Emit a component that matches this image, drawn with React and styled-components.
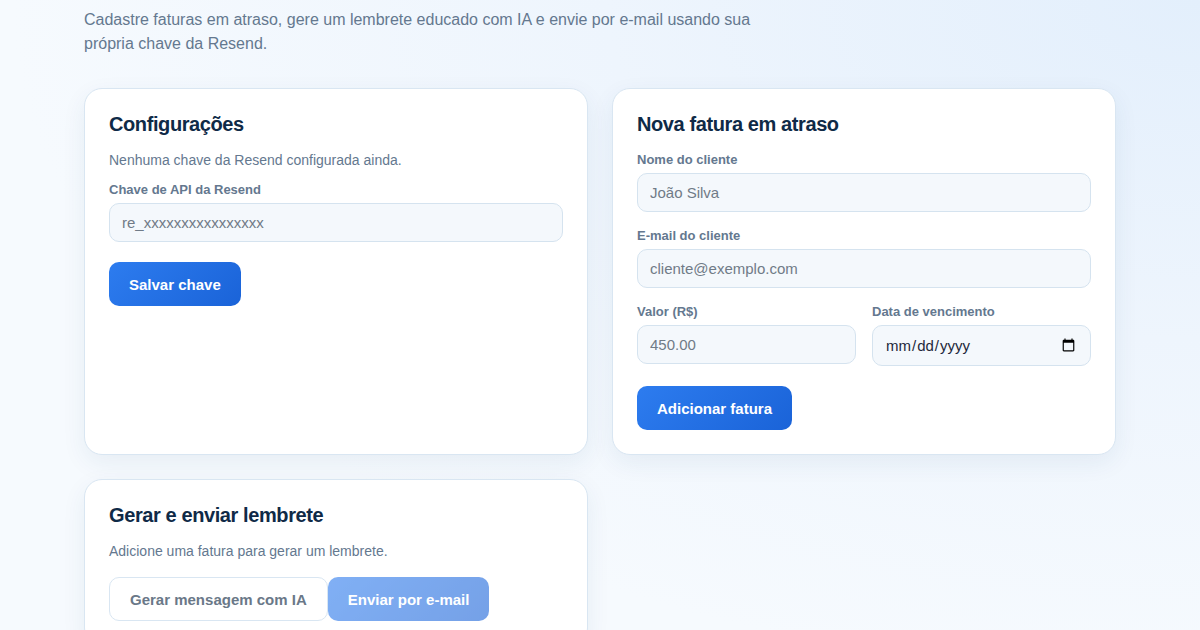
import React, { useState } from "react";
import styled, { createGlobalStyle } from "styled-components";

const GlobalStyle = createGlobalStyle`
  * { box-sizing: border-box; }
  html, body { margin: 0; padding: 0; }
  body {
    font-family: "Liberation Sans", Arial, sans-serif;
    background: radial-gradient(ellipse at 100% 0%, #e3effc 0%, #eef5fd 35%, #f6fafe 70%);
    background-color: #f6fafe;
    min-height: 630px;
    color: #0f2a47;
  }
`;

const Page = styled.div`
  width: 1032px;
  margin: 0 auto;
  padding: 8px 0 40px;
`;

const Intro = styled.p`
  margin: 0 0 32px;
  max-width: 680px;
  font-size: 16px;
  line-height: 24px;
  color: #64788f;
`;

const Grid = styled.div`
  display: grid;
  grid-template-columns: 1fr 1fr;
  gap: 24px;
`;

const Card = styled.section`
  background: #fff;
  border: 1px solid #d9e6f2;
  border-radius: 18px;
  padding: 24px;
  box-shadow: 0 8px 24px rgba(30, 64, 110, 0.07);
  display: flex;
  flex-direction: column;
`;

const Title = styled.h2`
  margin: 0 0 ${(p) => p.$gap || 17}px;
  font-size: 20px;
  line-height: 22px;
  font-weight: 700;
  letter-spacing: -0.02em;
  color: #0f2a47;
`;

const Note = styled.p`
  margin: 0 0 12px;
  font-size: 14px;
  line-height: 20px;
  color: #64788f;
`;

const Field = styled.label`
  display: flex;
  flex-direction: column;
  gap: 6px;
  margin-bottom: ${(p) => (p.$last ? 20 : 16)}px;
  min-width: 0;
`;

const LabelText = styled.span`
  font-size: 13px;
  line-height: 15px;
  font-weight: 700;
  color: #64788f;
`;

const Input = styled.input`
  width: 100%;
  height: ${(p) => (p.type === "date" ? 41 : 39)}px;
  padding: 0 12px;
  border: 1px solid #d5e3ef;
  border-radius: 10px;
  background: #f4f8fc;
  font-family: "Liberation Sans", Arial, sans-serif;
  font-size: 15px;
  color: #1e293b;
  outline: none;
  &::placeholder { color: #707b87; }
`;

const Row = styled.div`
  display: grid;
  grid-template-columns: 1fr 1fr;
  gap: 16px;
`;

const Actions = styled.div`
  display: flex;
  align-items: center;
  margin-top: ${(p) => p.$top || 0}px;
`;

const Button = styled.button`
  height: 44px;
  padding: 0 20px;
  border-radius: 10px;
  font-family: "Liberation Sans", Arial, sans-serif;
  font-size: 15px;
  font-weight: 700;
  cursor: pointer;
  border: none;
  color: #fff;
  background: linear-gradient(135deg, #2d7cef 0%, #1a63d8 100%);
  &:disabled {
    opacity: 0.6;
    cursor: default;
  }
`;

const GhostButton = styled(Button)`
  background: #fff;
  border: 1px solid #d9e6f2;
  color: #6a7888;
`;

export default function App() {
  const [key, setKey] = useState("");

  return (
    <>
      <GlobalStyle />
      <Page>
        <Intro>
          Cadastre faturas em atraso, gere um lembrete educado com IA e envie por e-mail usando sua
          própria chave da Resend.
        </Intro>
        <Grid>
          <Card>
            <Title $gap={15}>Configurações</Title>
            <Note>Nenhuma chave da Resend configurada ainda.</Note>
            <Field $last>
              <LabelText>Chave de API da Resend</LabelText>
              <Input
                placeholder="re_xxxxxxxxxxxxxxxx"
                value={key}
                onChange={(e) => setKey(e.target.value)}
              />
            </Field>
            <Actions>
              <Button>Salvar chave</Button>
            </Actions>
          </Card>

          <Card>
            <Title>Nova fatura em atraso</Title>
            <Field>
              <LabelText>Nome do cliente</LabelText>
              <Input placeholder="João Silva" />
            </Field>
            <Field>
              <LabelText>E-mail do cliente</LabelText>
              <Input type="email" placeholder="cliente@exemplo.com" />
            </Field>
            <Row>
              <Field $last>
                <LabelText>Valor (R$)</LabelText>
                <Input type="number" placeholder="450.00" />
              </Field>
              <Field $last>
                <LabelText>Data de vencimento</LabelText>
                <Input type="date" />
              </Field>
            </Row>
            <Actions>
              <Button>Adicionar fatura</Button>
            </Actions>
          </Card>

          <Card>
            <Title $gap={15}>Gerar e enviar lembrete</Title>
            <Note>Adicione uma fatura para gerar um lembrete.</Note>
            <Actions $top={4}>
              <GhostButton>Gerar mensagem com IA</GhostButton>
              <Button disabled>Enviar por e-mail</Button>
            </Actions>
          </Card>
        </Grid>
      </Page>
    </>
  );
}
